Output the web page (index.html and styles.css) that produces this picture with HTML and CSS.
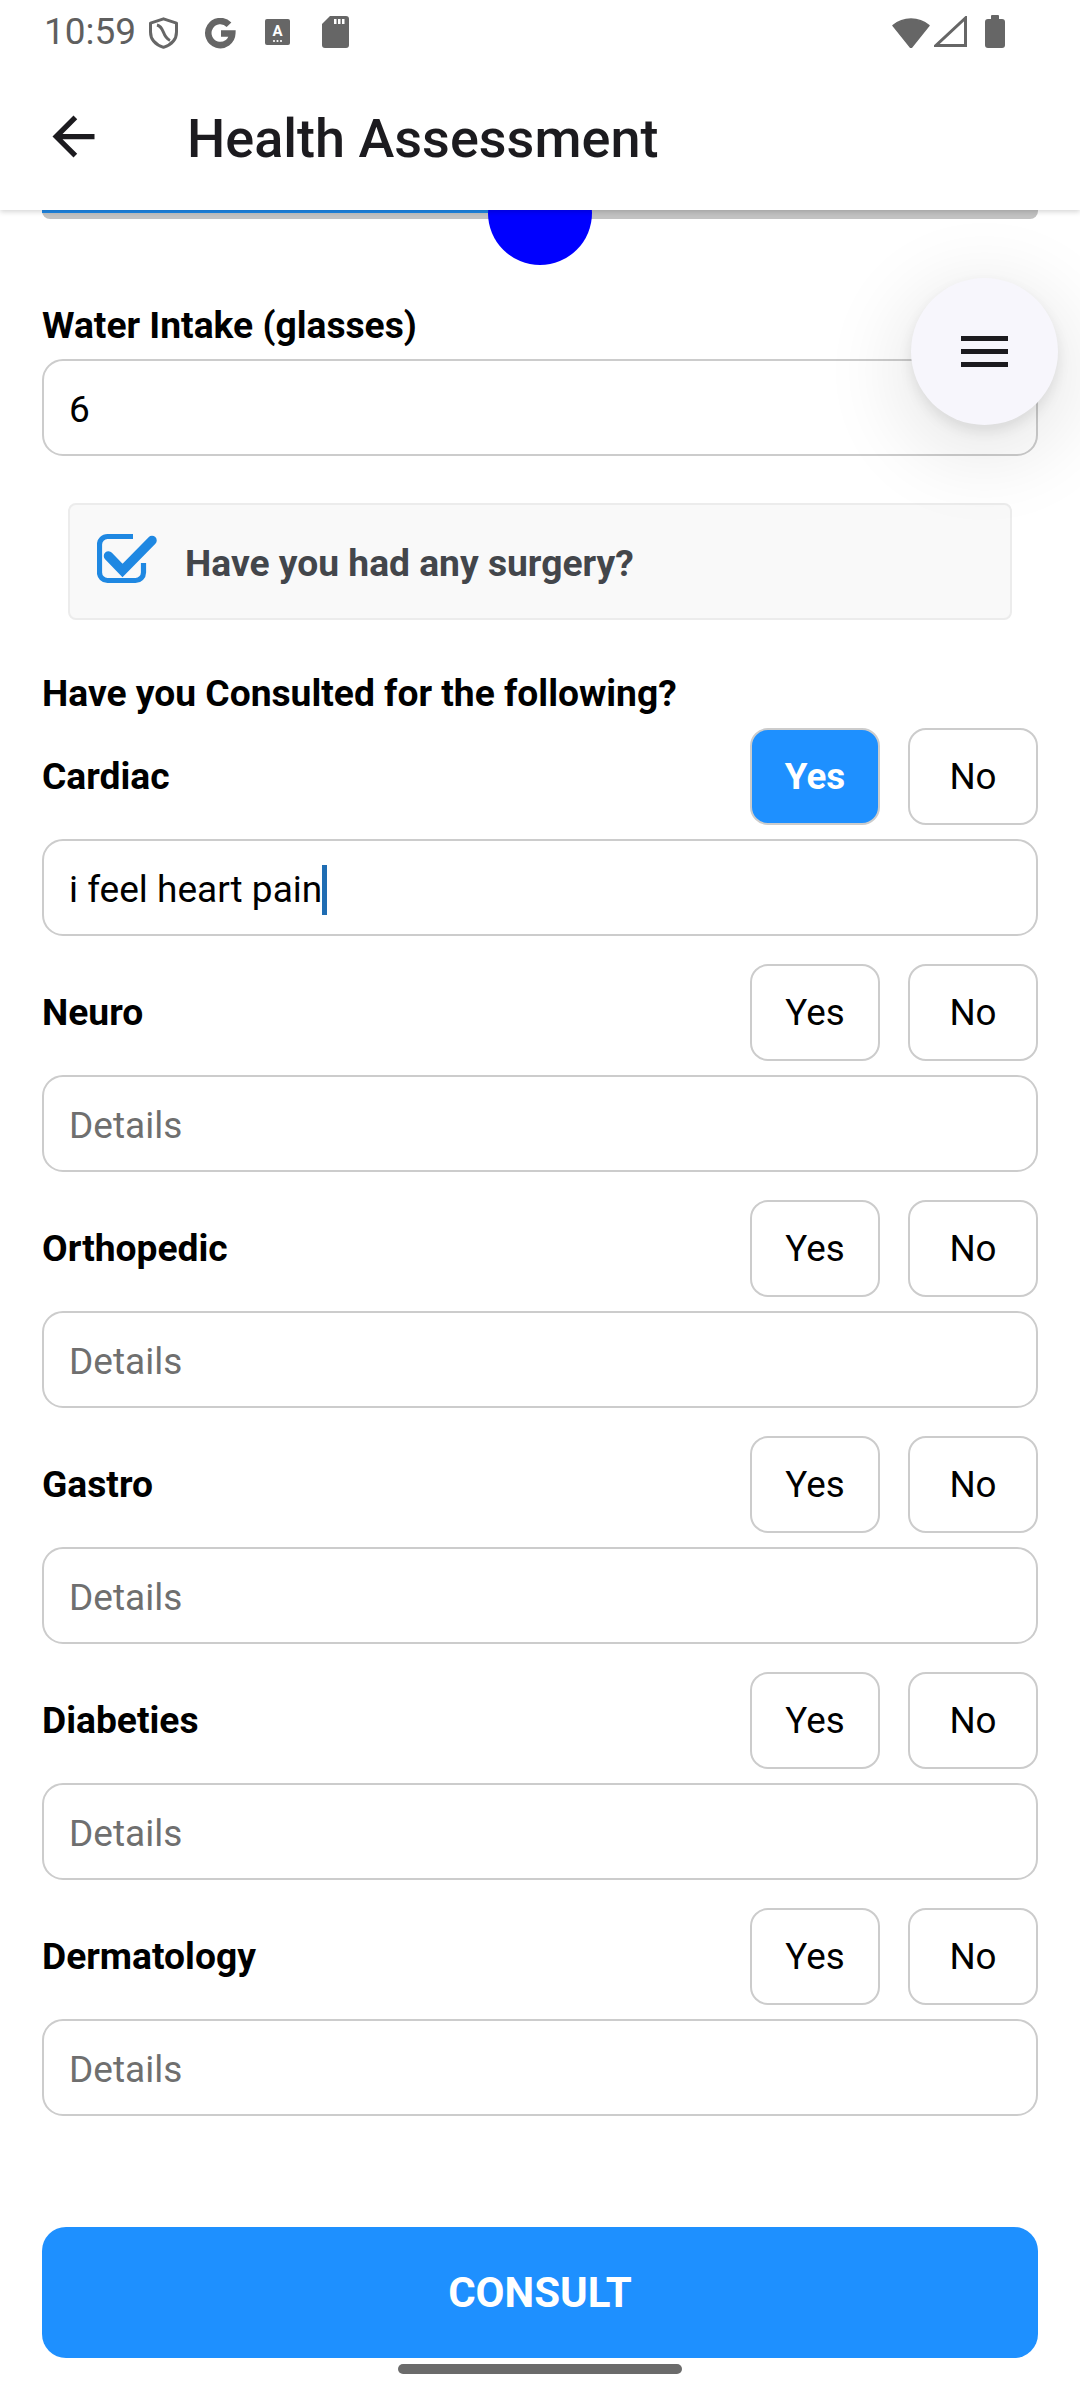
FILE: index.html
```html
<!DOCTYPE html>
<html lang="en">
<head>
<meta charset="utf-8">
<title>Health Assessment</title>
<link rel="stylesheet" href="styles.css">
</head>
<body>
<div class="screen">
  <div class="statusbar">
    <div class="sb-left">
      <span class="clock">10:59</span>
      <svg class="sb-shield" width="31" height="32" viewBox="0 0 31 32"><path d="M15.5 1.8 L28.5 6.2 V15 C28.5 22.5 23 27.8 15.5 30.3 C8 27.8 2.5 22.5 2.5 15 V6.2 Z" fill="none" stroke="#666" stroke-width="3" stroke-linejoin="round"/><path d="M9 8 C17 10 13.5 19.5 22 23.5" fill="none" stroke="#666" stroke-width="3"/></svg>
      <svg class="sb-g" width="33" height="31" viewBox="0 0 33 31"><path d="M25 6.8 A12 12 0 1 0 28.3 15.5 H17" fill="none" stroke="#666" stroke-width="6.5"/></svg>
      <svg class="sb-a" width="25" height="26" viewBox="0 0 25 26"><rect x="0" y="0" width="25" height="26" rx="2" fill="#666"/><text x="12.5" y="16.5" text-anchor="middle" font-family="Roboto, sans-serif" font-weight="700" font-size="15" fill="#fff">A</text><circle cx="9" cy="22" r="1.1" fill="#fff"/><circle cx="12.5" cy="22" r="1.1" fill="#fff"/><circle cx="16" cy="22" r="1.1" fill="#fff"/></svg>
      <svg class="sb-sd" width="27" height="32" viewBox="0 0 27 32"><path d="M8 0 H24 A3 3 0 0 1 27 3 V29 A3 3 0 0 1 24 32 H3 A3 3 0 0 1 0 29 V8 Z" fill="#666"/><rect x="12" y="3" width="2.5" height="5" fill="#fff"/><rect x="16" y="3" width="2.5" height="5" fill="#fff"/><rect x="20" y="3" width="2.5" height="5" fill="#fff"/></svg>
    </div>
    <div class="sb-right">
      <svg class="sb-wifi" width="38" height="32" viewBox="0 0 38 32"><path d="M19 32 L1 9.5 A28 28 0 0 1 37 9.5 Z" fill="#666" stroke="#666" stroke-width="1.5" stroke-linejoin="round"/></svg>
      <svg class="sb-signal" width="33" height="31" viewBox="0 0 33 31"><path d="M2 29.5 H31.5 V2 Z" fill="none" stroke="#666" stroke-width="3" stroke-linejoin="miter"/></svg>
      <svg class="sb-battery" width="20" height="33" viewBox="0 0 20 33"><rect x="6" y="0" width="8" height="5" rx="1" fill="#666"/><rect x="0" y="4" width="20" height="29" rx="3" fill="#666"/></svg>
    </div>
  </div>

  <header class="appbar">
    <div class="back">
      <svg width="63" height="63" viewBox="0 0 24 24"><path d="M20 11H7.83l5.59-5.59L12 4l-8 8 8 8 1.41-1.41L7.83 13H20v-2z" fill="#1c1b1f"/></svg>
    </div>
    <h1 class="title">Health Assessment</h1>
  </header>

  <main class="content">
    <div class="slider">
      <div class="slider-track"><div class="slider-fill"></div></div>
      <div class="slider-thumb"></div>
    </div>

    <div class="field-label">Water Intake (glasses)</div>
    <div class="text-input">6</div>

    <div class="check-card">
      <svg class="checkbox" width="60" height="52" viewBox="0 0 60 52"><path d="M36 4.5 H10.5 A8 8 0 0 0 2.5 12.5 V40.5 A8 8 0 0 0 10.5 48.5 H38.5 A8 8 0 0 0 46.5 40.5 V31" fill="none" stroke="#1f88e2" stroke-width="5.2"/><path d="M11.5 24 L25.5 38.5 L55 8.5" fill="none" stroke="#1f88e2" stroke-width="9.5" stroke-linejoin="miter" stroke-linecap="round"/></svg>
      <span class="check-text">Have you had any surgery?</span>
    </div>

    <h2 class="section-title">Have you Consulted for the following?</h2>

    <div class="category">
      <div class="cat-row">
        <span class="cat-label">Cardiac</span>
        <div class="choices"><button class="choice selected">Yes</button><button class="choice">No</button></div>
      </div>
      <div class="text-input detail">i feel heart pain<span class="caret"></span></div>
    </div>

    <div class="category">
      <div class="cat-row">
        <span class="cat-label">Neuro</span>
        <div class="choices"><button class="choice">Yes</button><button class="choice">No</button></div>
      </div>
      <div class="text-input detail placeholder">Details</div>
    </div>

    <div class="category">
      <div class="cat-row">
        <span class="cat-label">Orthopedic</span>
        <div class="choices"><button class="choice">Yes</button><button class="choice">No</button></div>
      </div>
      <div class="text-input detail placeholder">Details</div>
    </div>

    <div class="category">
      <div class="cat-row">
        <span class="cat-label">Gastro</span>
        <div class="choices"><button class="choice">Yes</button><button class="choice">No</button></div>
      </div>
      <div class="text-input detail placeholder">Details</div>
    </div>

    <div class="category">
      <div class="cat-row">
        <span class="cat-label">Diabeties</span>
        <div class="choices"><button class="choice">Yes</button><button class="choice">No</button></div>
      </div>
      <div class="text-input detail placeholder">Details</div>
    </div>

    <div class="category">
      <div class="cat-row">
        <span class="cat-label">Dermatology</span>
        <div class="choices"><button class="choice">Yes</button><button class="choice">No</button></div>
      </div>
      <div class="text-input detail placeholder">Details</div>
    </div>

    <button class="consult">CONSULT</button>
  </main>

  <button class="fab" aria-label="menu">
    <span class="bar"></span><span class="bar"></span><span class="bar"></span>
  </button>

  <div class="home-indicator"></div>
</div>
</body>
</html>
```

FILE: styles.css
```css
html, body {
  margin: 0;
  padding: 0;
}
body {
  width: 1080px;
  height: 2400px;
  overflow: hidden;
  background: #ffffff;
  font-family: Roboto, "Noto Sans", "Liberation Sans", sans-serif;
  color: #000;
}
.screen {
  position: relative;
  width: 1080px;
  height: 2400px;
  overflow: hidden;
  background: #ffffff;
}

/* status bar */
.statusbar {
  height: 63px;
  display: flex;
  align-items: center;
  justify-content: space-between;
  padding: 0 75px 0 44px;
  box-sizing: border-box;
  background: #fff;
  position: relative;
  z-index: 4;
}
.sb-left, .sb-right {
  display: flex;
  align-items: center;
}
.clock {
  font-size: 37px;
  color: #5f5f5f;
  line-height: 40px;
}
.sb-shield { margin-left: 12px; margin-top: 3px; }
.sb-g { margin-left: 25px; margin-top: 4px; }
.sb-a { margin-left: 28px; }
.sb-sd { margin-left: 32px; }
.sb-signal { margin-left: 4px; }
.sb-battery { margin-left: 18px; }

/* app bar */
.appbar {
  height: 147px;
  display: flex;
  align-items: center;
  background: #ffffff;
  position: relative;
  z-index: 3;
  box-shadow: 0 2px 5px rgba(0, 0, 0, 0.16);
}
.back {
  width: 63px;
  height: 63px;
  margin-left: 42px;
}
.back svg { display: block; }
.title {
  margin: 0 0 0 82px;
  font-size: 54px;
  font-weight: 500;
  color: #1c1b1f;
  line-height: 62px;
  padding-top: 4px;
}

/* content */
.content {
  position: relative;
  z-index: 1;
  padding: 0 42px;
}
.slider {
  position: relative;
  height: 104px;
  margin-top: -49px;
}
.slider-track {
  position: relative;
  top: 43px;
  height: 15px;
  background: #c2c2c2;
  border-radius: 0 0 8px 8px;
}
.slider-fill {
  width: 446px;
  height: 9px;
  background: #1f87e5;
}
.slider-thumb {
  position: absolute;
  left: 446px;
  top: 0;
  width: 104px;
  height: 104px;
  border-radius: 50%;
  background: #0000ff;
}

.field-label {
  margin-top: 39px;
  font-weight: 700;
  font-size: 37.2px;
  line-height: 43px;
}
.text-input {
  height: 97px;
  box-sizing: border-box;
  border: 2.6px solid #cccccc;
  border-radius: 21px;
  display: flex;
  align-items: center;
  padding: 4px 24px 0 25px;
  font-size: 37px;
  line-height: 43px;
  color: #000;
  background: #fff;
}
.field-label + .text-input {
  margin-top: 12px;
}
.placeholder {
  color: #6f6f6f;
}
.caret {
  display: inline-block;
  width: 5px;
  height: 50px;
  background: #1f6db3;
  margin-left: 0;
}

.check-card {
  margin: 47px 26px 0 26px;
  height: 117px;
  box-sizing: border-box;
  background: #f9f9f9;
  border: 2px solid #ececec;
  border-radius: 8px;
  display: flex;
  align-items: center;
  padding-left: 27px;
}
.checkbox {
  display: block;
  margin-bottom: 7px;
}
.check-text {
  margin-left: 28px;
  font-size: 37.2px;
  font-weight: 700;
  color: #43464b;
  line-height: 43px;
  padding-top: 3px;
}

.section-title {
  margin: 52px 0 13px 0;
  font-size: 37.2px;
  font-weight: 700;
  line-height: 43px;
}

.category {
  margin-bottom: 28px;
}
.category:last-of-type {
  margin-bottom: 0;
}
.cat-row {
  display: flex;
  align-items: center;
  justify-content: space-between;
}
.cat-label {
  font-size: 37.2px;
  font-weight: 700;
  line-height: 43px;
}
.choices {
  display: flex;
  gap: 28px;
}
.choice {
  width: 130px;
  height: 97px;
  box-sizing: border-box;
  border: 2.6px solid #cccccc;
  border-radius: 18px;
  background: #ffffff;
  font-family: Roboto, "Noto Sans", sans-serif;
  font-size: 36.75px;
  color: #000;
  padding: 0;
}
.choice.selected {
  background: #1e90ff;
  color: #ffffff;
  font-weight: 700;
}
.detail {
  margin-top: 14px;
}

.consult {
  display: block;
  width: 100%;
  height: 131px;
  margin-top: 111px;
  border: none;
  border-radius: 24px;
  background: #1e90ff;
  color: #ffffff;
  font-family: Roboto, "Noto Sans", sans-serif;
  font-weight: 700;
  font-size: 42px;
  padding: 0;
}

/* floating menu button */
.fab {
  position: absolute;
  left: 911px;
  top: 278px;
  width: 147px;
  height: 147px;
  border-radius: 50%;
  border: none;
  padding: 0;
  background: #f7f6fc;
  z-index: 5;
  display: flex;
  flex-direction: column;
  align-items: center;
  justify-content: center;
  gap: 8px;
  box-shadow: 0 6px 14px rgba(0, 0, 0, 0.09), 0 20px 80px 16px rgba(0, 0, 0, 0.09);
}
.fab .bar {
  display: block;
  width: 47px;
  height: 5px;
  background: #1c1b1f;
}

.home-indicator {
  position: absolute;
  left: 398px;
  top: 2364px;
  width: 284px;
  height: 10px;
  border-radius: 5px;
  background: #6b6b6b;
  z-index: 6;
}
```
